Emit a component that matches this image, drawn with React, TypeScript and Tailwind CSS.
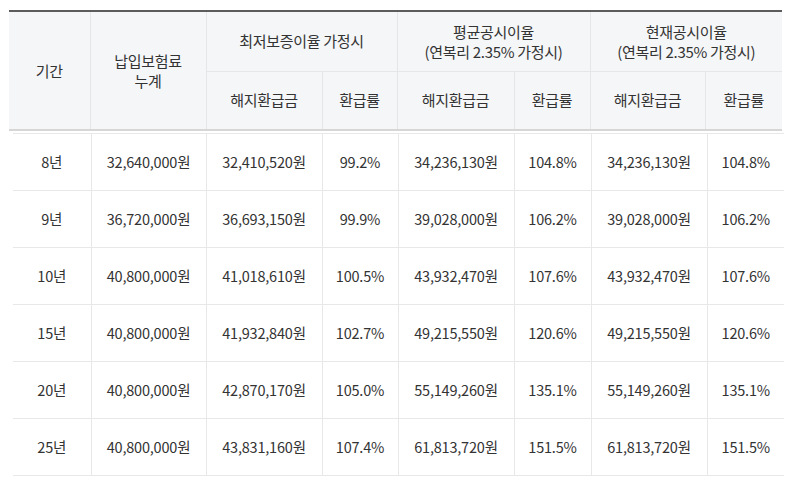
const rows = [
  { period: '8년', paid: '32,640,000원', minAmt: '32,410,520원', minRate: '99.2%', avgAmt: '34,236,130원', avgRate: '104.8%', curAmt: '34,236,130원', curRate: '104.8%' },
  { period: '9년', paid: '36,720,000원', minAmt: '36,693,150원', minRate: '99.9%', avgAmt: '39,028,000원', avgRate: '106.2%', curAmt: '39,028,000원', curRate: '106.2%' },
  { period: '10년', paid: '40,800,000원', minAmt: '41,018,610원', minRate: '100.5%', avgAmt: '43,932,470원', avgRate: '107.6%', curAmt: '43,932,470원', curRate: '107.6%' },
  { period: '15년', paid: '40,800,000원', minAmt: '41,932,840원', minRate: '102.7%', avgAmt: '49,215,550원', avgRate: '120.6%', curAmt: '49,215,550원', curRate: '120.6%' },
  { period: '20년', paid: '40,800,000원', minAmt: '42,870,170원', minRate: '105.0%', avgAmt: '55,149,260원', avgRate: '135.1%', curAmt: '55,149,260원', curRate: '135.1%' },
  { period: '25년', paid: '40,800,000원', minAmt: '43,831,160원', minRate: '107.4%', avgAmt: '61,813,720원', avgRate: '151.5%', curAmt: '61,813,720원', curRate: '151.5%' },
];

const headWidths = [81, 116, 116, 75, 117, 76, 115, 77];
const bodyWidths = [78, 115, 116, 76, 116, 77, 116, 77];

const th = 'border border-[#e6e6e6] font-normal text-center align-middle';
const td = 'border border-[#e8e8e8] text-center align-middle';

export default function App() {
  return (
    <div
      className="min-h-[480px] w-[789px] bg-white pt-[10px] text-[#333]"
      style={{ fontFamily: '"Noto Sans CJK KR", "Noto Sans", sans-serif' }}
    >
      {/* Header table */}
      <table className="ml-[9px] w-[773px] table-fixed border-collapse bg-[#f5f6f8] text-[15px] leading-[20px] tracking-[-0.3px]">
        <colgroup>
          {headWidths.map((w, i) => (
            <col key={i} style={{ width: w }} />
          ))}
        </colgroup>
        <thead>
          <tr className="h-[60px] border-t-2 border-t-[#5c5c5c]">
            <th rowSpan={2} className={`${th} border-l-0`}>기간</th>
            <th rowSpan={2} className={th}>
              납입보험료
              <br />
              누계
            </th>
            <th colSpan={2} className={th}>최저보증이율 가정시</th>
            <th colSpan={2} className={`${th} pt-[2px]`}>
              평균공시이율
              <br />
              (연복리 2.35% 가정시)
            </th>
            <th colSpan={2} className={`${th} border-r-0 pt-[2px]`}>
              현재공시이율
              <br />
              (연복리 2.35% 가정시)
            </th>
          </tr>
          <tr className="h-[59px] border-b-2 border-b-[#d6d6d6]">
            <th className={th}>해지환급금</th>
            <th className={th}>환급률</th>
            <th className={th}>해지환급금</th>
            <th className={th}>환급률</th>
            <th className={th}>해지환급금</th>
            <th className={`${th} border-r-0`}>환급률</th>
          </tr>
        </thead>
      </table>

      {/* Body table */}
      <table className="ml-[13px] mt-[2px] w-[771px] table-fixed border-collapse text-[14.5px] tracking-[-0.2px]">
        <colgroup>
          {bodyWidths.map((w, i) => (
            <col key={i} style={{ width: w }} />
          ))}
        </colgroup>
        <tbody>
          {rows.map((r) => (
            <tr key={r.period} className="h-[57px] border-b border-b-[#e8e8e8] last:border-b-[#dcdcdc]">
              <td className={`${td} border-l-0`}>{r.period}</td>
              <td className={td}>{r.paid}</td>
              <td className={td}>{r.minAmt}</td>
              <td className={td}>{r.minRate}</td>
              <td className={td}>{r.avgAmt}</td>
              <td className={td}>{r.avgRate}</td>
              <td className={td}>{r.curAmt}</td>
              <td className={`${td} border-r-0`}>{r.curRate}</td>
            </tr>
          ))}
        </tbody>
      </table>
    </div>
  );
}
